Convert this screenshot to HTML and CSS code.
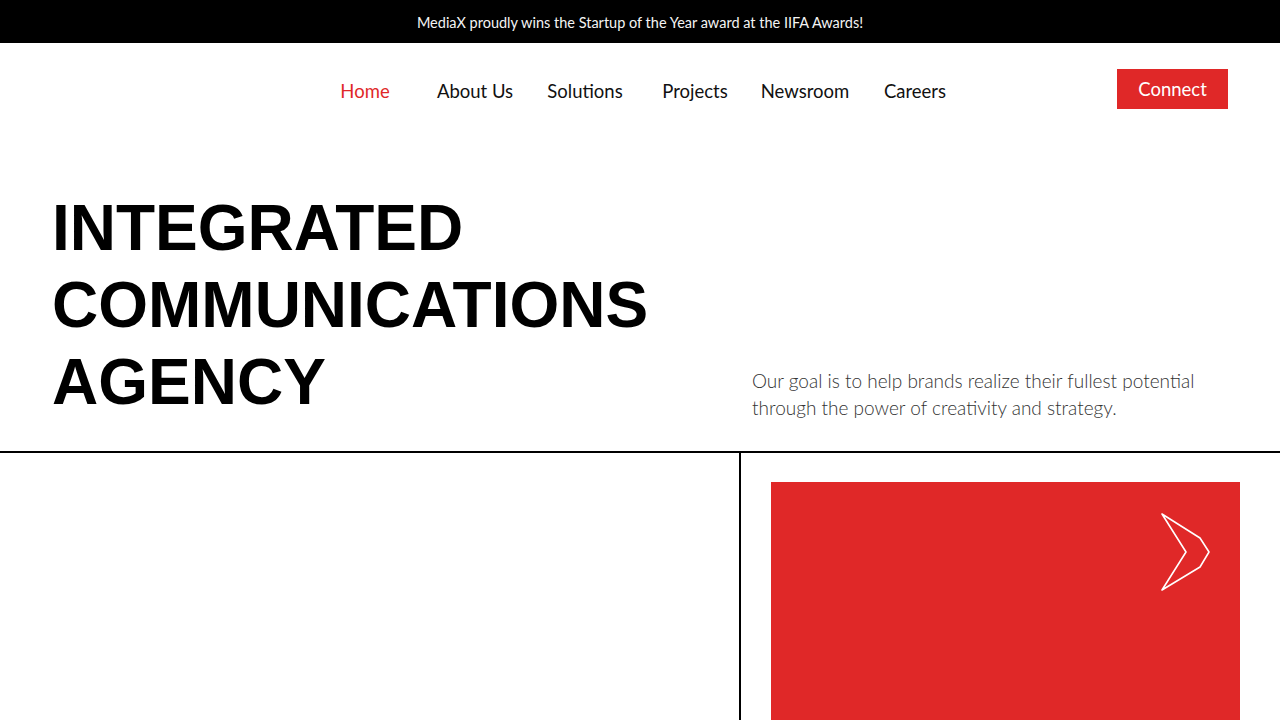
FILE: index.html
```html
<!DOCTYPE html>
<html lang="en">
<head>
  <meta charset="UTF-8" />
  <meta name="viewport" content="width=device-width, initial-scale=1.0"/>
  <title>MediaX</title>
  <link rel="stylesheet" href="styles.css">
</head>
<body>
  <div class="anuncio">MediaX proudly wins the Startup of the Year award at the IIFA Awards!</div>

  <header class="cabecera">
    <div class="logo"></div>
    <nav class="menu">
      <a href="#" class="activo">Home</a>
      <a href="#">About Us</a>
      <a href="#">Solutions</a>
      <a href="#">Projects</a>
      <a href="#">Newsroom</a>
      <a href="#">Careers</a>
    </nav>
    <div class="acciones">
      <a href="#" class="boton">Connect</a>
    </div>
  </header>

  <section class="hero">
    <h1>INTEGRATED<br>COMMUNICATIONS<br>AGENCY</h1>
    <p>Our goal is to help brands realize their fullest potential through the power of creativity and strategy.</p>
  </section>

  <section class="bloque">
    <div class="columna-izq"></div>
    <div class="columna-der">
      <div class="tarjeta">
        <svg class="flecha" width="52" height="80" viewBox="0 0 52 80">
          <polygon points="2,2 40,26 49,40 40,55 2,78 26,40" fill="none" stroke="#fff" stroke-width="1.6" stroke-linejoin="round"/>
        </svg>
      </div>
    </div>
  </section>
</body>
</html>
```

FILE: styles.css
```css
* {
  box-sizing: border-box;
}

body {
  margin: 0;
  font-family: Lato, "Open Sans", Arial, sans-serif;
  background: #ffffff;
  color: #111;
  overflow: hidden;
}

a {
  text-decoration: none;
  color: inherit;
}

.anuncio {
  background: #000;
  color: #f4f4f4;
  height: 43px;
  line-height: 45px;
  text-align: center;
  font-size: 14.5px;
}

.cabecera {
  display: grid;
  grid-template-columns: 1fr auto 1fr;
  align-items: center;
  height: 97px;
  padding: 0 52px 6px;
}

.menu {
  display: flex;
  padding-top: 4px;
}

.menu a {
  width: 110px;
  text-align: center;
  font-size: 18.5px;
  color: #111;
}

.menu a.activo {
  color: #e02828;
}

.acciones {
  display: flex;
  justify-content: flex-end;
}

.boton {
  background: #e02828;
  color: #fff;
  font-size: 18.5px;
  width: 111px;
  height: 40px;
  display: flex;
  align-items: center;
  justify-content: center;
}

.hero {
  display: grid;
  grid-template-columns: 740px 1fr;
  align-items: end;
  padding: 50px 0 30px;
}

.hero h1 {
  margin: 0;
  padding-left: 52px;
  font-family: "Liberation Sans", Arial, sans-serif;
  font-weight: bold;
  font-size: 64px;
  line-height: 77px;
  color: #000;
}

.hero p {
  margin: 0;
  padding: 0 40px 0 12px;
  font-size: 19px;
  font-weight: 300;
  line-height: 27px;
  color: #333;
}

.bloque {
  display: grid;
  grid-template-columns: 741px 1fr;
  border-top: 2px solid #000;
  height: 269px;
}

.columna-izq {
  border-right: 2px solid #000;
}

.columna-der {
  padding: 29px 40px 0 30px;
}

.tarjeta {
  position: relative;
  background: #e02828;
  height: 238px;
}

.flecha {
  position: absolute;
  left: 389px;
  top: 30px;
}
```
